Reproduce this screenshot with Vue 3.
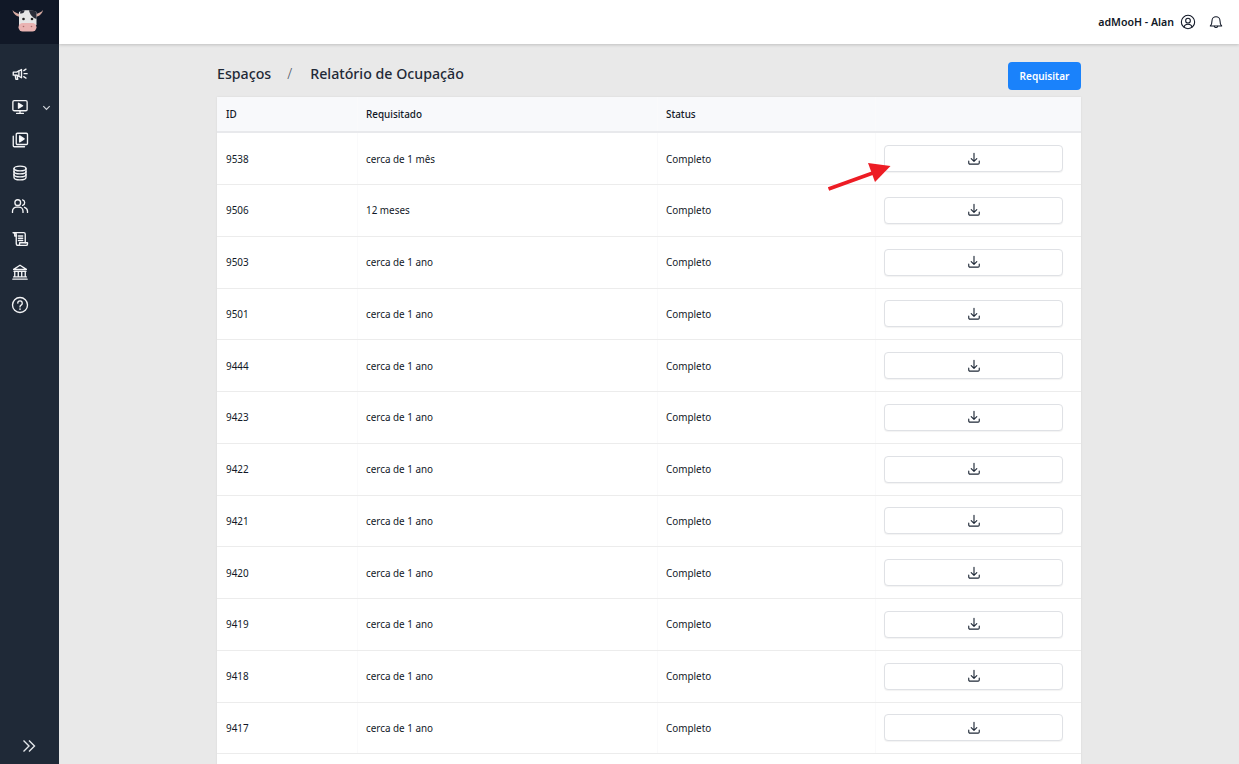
<script setup>
const rows = [
  ['9538', 'cerca de 1 mês'],
  ['9506', '12 meses'],
  ['9503', 'cerca de 1 ano'],
  ['9501', 'cerca de 1 ano'],
  ['9444', 'cerca de 1 ano'],
  ['9423', 'cerca de 1 ano'],
  ['9422', 'cerca de 1 ano'],
  ['9421', 'cerca de 1 ano'],
  ['9420', 'cerca de 1 ano'],
  ['9419', 'cerca de 1 ano'],
  ['9418', 'cerca de 1 ano'],
  ['9417', 'cerca de 1 ano']
]
</script>

<template>
  <div class="app">
    <aside class="side">
      <div class="logo">
        <svg width="32" height="24" viewBox="0 0 32 24">
          <path d="M8 6 C5 5.500 2 4 0.500 2 C1 5 3.500 8 8 9Z" fill="#d8aba2"/>
          <path d="M23.500 6 C26.500 5.500 29.500 4 31 2 C30.500 5 28 8 23.500 9Z" fill="#d8aba2"/>
          <path d="M7 4 C10 1.500 21 1.500 24.500 4 L24.500 17 L7 17Z" fill="#e6e6e6"/>
          <path d="M17 2.200 C20 2 23 2.500 24.500 4 L24.500 11 C21 10 18 7 17 2.200Z" fill="#2b2d38"/>
          <path d="M8.500 3 L12.500 2.300 C12.500 5 10.500 6 8 5.500Z" fill="#2b2d38"/>
          <circle cx="11.500" cy="11" r="1.300" fill="#222"/>
          <circle cx="20" cy="11" r="1.300" fill="#222"/>
          <rect x="6.500" y="15" width="18" height="8.500" rx="4.200" fill="#e9b3b2"/>
          <circle cx="11.500" cy="18.500" r="0.800" fill="#a86f6c"/>
          <circle cx="19.500" cy="18.500" r="0.800" fill="#a86f6c"/>
        </svg>
      </div>
      <nav class="nav">
        <div class="item">
          <svg class="ic" viewBox="0 0 24 24"><path d="M3 9.500h4.500L14 6v11L7.500 13.500H3z" /><path d="M5.500 13.500 6.500 19h2.500l-1-5.500" /><path d="M10.500 8v7" /><path d="M17.500 11.500h4M17 7.500 20 5.500M17 15.500 20 17.500"/></svg>
        </div>
        <div class="item">
          <svg class="ic" viewBox="0 0 24 24"><rect x="2.500" y="3.500" width="19" height="13.500" rx="1.800"/><path d="M12 17v3M7.500 20.500h9"/><path d="M10 7v6.500l5.500-3.200z" fill="#fff"/></svg>
          <svg class="chev" viewBox="0 0 12 12"><path d="M2.500 4.500 6 8l3.500-3.500"/></svg>
        </div>
        <div class="item">
          <svg class="ic" viewBox="0 0 24 24"><rect x="7" y="3" width="15" height="15" rx="1.500"/><path d="M3 7v12.500A1.500 1.500 0 0 0 4.500 21H18"/><path d="M11.500 6.500v8l6-4z" fill="#fff"/></svg>
        </div>
        <div class="item">
          <svg class="ic" viewBox="0 0 24 24"><ellipse cx="12" cy="6" rx="8" ry="3.200"/><path d="M4 6v12c0 1.800 3.600 3.200 8 3.200s8-1.400 8-3.200V6"/><path d="M4 10c0 1.800 3.600 3.200 8 3.200s8-1.400 8-3.200M4 14c0 1.800 3.600 3.200 8 3.200s8-1.400 8-3.200"/></svg>
        </div>
        <div class="item">
          <svg class="ic" viewBox="0 0 24 24"><circle cx="9" cy="7.500" r="3.800"/><path d="M2 20.500v-1.500a5.500 5.500 0 0 1 5.500-5.500h3a5.500 5.500 0 0 1 5.500 5.500v1.500"/><path d="M15.500 3.900a3.800 3.800 0 0 1 0 7.300M18 13.700a5.500 5.500 0 0 1 4 5.300v1.500"/></svg>
        </div>
        <div class="item">
          <svg class="ic" viewBox="0 0 24 24"><path d="M3 3.500h14a2 2 0 0 1 2 2V17"/><path d="M3 3.500a2 2 0 0 1 2 2V8h2.500M5 3.500a2 2 0 0 1 2 2V18a2.500 2.500 0 0 0 2.500 2.500H20a2 2 0 0 0 2-2V17H11.500v1.500a2 2 0 0 1-2 2"/><path d="M10 8h5.500M10 11h5.500M10 14h5.500" stroke-width="2"/></svg>
        </div>
        <div class="item">
          <svg class="ic" viewBox="0 0 24 24"><path d="M3.500 8.500 12 3l8.500 5.500z"/><path d="M5 11v7M9.700 11v7M14.300 11v7M19 11v7M4 11h16M3.500 18.500h17M2.500 21.500h19"/></svg>
        </div>
        <div class="item">
          <svg class="ic" viewBox="0 0 24 24"><circle cx="12" cy="12" r="10"/><path d="M9 9.500a3 3 0 1 1 4.500 2.600c-1 .6-1.500 1.200-1.500 2.400"/><path d="M12 17.300v.3" stroke-width="2.200"/></svg>
        </div>
      </nav>
      <div class="expand">
        <svg width="14" height="14" viewBox="0 0 14 14"><path d="M1.500 1.500 7 7l-5.500 5.500M7 1.500 12.500 7 7 12.500"/></svg>
      </div>
    </aside>

    <div class="body">
      <header class="top">
        <span class="user">adMooH - Alan</span>
        <svg class="tic" viewBox="0 0 24 24"><circle cx="12" cy="12" r="10"/><circle cx="12" cy="10" r="3.500"/><path d="M5.800 19.500c1-2.800 3.300-4.200 6.200-4.200s5.200 1.400 6.200 4.200"/></svg>
        <svg class="tic bell" viewBox="0 0 24 24"><path d="M6 10a6 6 0 0 1 12 0c0 5 1 6.500 2.500 8h-17C5 16.500 6 15 6 10z"/><path d="M9.500 18.500a2.600 2.600 0 0 0 5 0"/></svg>
      </header>

      <main class="main">
        <div class="head">
          <div class="crumbs">
            <span>Espaços</span>
            <span class="sep">/</span>
            <span>Relatório de Ocupação</span>
          </div>
          <button class="req">Requisitar</button>
        </div>

        <div class="table">
          <div class="row thead">
            <div class="cell">ID</div>
            <div class="cell">Requisitado</div>
            <div class="cell">Status</div>
            <div class="cell"></div>
          </div>
          <div v-for="r in rows" :key="r[0]" class="row">
            <div class="cell">{{ r[0] }}</div>
            <div class="cell">{{ r[1] }}</div>
            <div class="cell">Completo</div>
            <div class="cell">
              <button class="dl" aria-label="Baixar">
                <svg viewBox="0 0 16 16"><path d="M8 1.500v9M4.800 7.500 8 10.700l3.200-3.200"/><path d="M2 10.500v2a1.300 1.300 0 0 0 1.300 1.300h9.400a1.300 1.300 0 0 0 1.300-1.300v-2"/></svg>
              </button>
            </div>
          </div>
        </div>

        <svg class="arrow" width="70" height="34" viewBox="0 0 70 34">
          <path d="M1.500 29 50 11.500" stroke="#ed1c24" stroke-width="3.800" fill="none"/>
          <path d="M63.500 6 41 3 48 22z" fill="#ed1c24"/>
        </svg>
      </main>
    </div>
  </div>
</template>

<style>
html, body { margin: 0; height: 100%; overflow: hidden; }
</style>

<style scoped>
.app {
  display: flex;
  height: 100vh;
  overflow: hidden;
  font-family: "Noto Sans", "Open Sans", sans-serif;
  color: #1f2937;
  background: #e9e9e9;
}
.side {
  width: 59px;
  flex: none;
  background: #1f2937;
  display: flex;
  flex-direction: column;
}
.logo {
  height: 44px;
  background: #111827;
  display: flex;
  justify-content: flex-start;
  padding: 8px 0 0 12px;
  box-sizing: border-box;
}
.nav {
  flex: 1;
  padding-top: 21px;
  display: flex;
  flex-direction: column;
  gap: 15px;
}
.item {
  height: 18px;
  padding-left: 11px;
  display: flex;
  align-items: center;
  position: relative;
}
.ic {
  width: 18px;
  height: 18px;
  fill: none;
  stroke: #f3f4f6;
  stroke-width: 1.800;
  stroke-linecap: round;
  stroke-linejoin: round;
}
.chev {
  position: absolute;
  left: 41px;
  top: 4px;
  width: 11px;
  height: 11px;
  fill: none;
  stroke: #d1d5db;
  stroke-width: 1.300;
}
.expand {
  height: 25px;
  padding-left: 22px;
  display: flex;
  align-items: flex-start;
}
.expand svg {
  fill: none;
  stroke: #e5e7eb;
  stroke-width: 1.400;
}
.body {
  flex: 1;
  min-width: 0;
  display: flex;
  flex-direction: column;
}
.top {
  height: 44px;
  flex: none;
  background: #fff;
  box-shadow: 0 1px 3px rgba(0, 0, 0, 0.18);
  display: flex;
  align-items: center;
  justify-content: flex-end;
  padding-right: 15px;
  box-sizing: border-box;
  position: relative;
  z-index: 2;
}
.user {
  font-size: 10.600px;
  font-weight: 600;
  color: #111827;
  margin-right: 6px;
}
.tic {
  width: 16px;
  height: 16px;
  fill: none;
  stroke: #111827;
  stroke-width: 1.600;
  stroke-linecap: round;
  stroke-linejoin: round;
}
.bell { margin-left: 12px; }
.main {
  flex: 1;
  min-height: 0;
  padding: 0 158px;
  position: relative;
}
.head {
  height: 53px;
  display: flex;
  align-items: center;
  justify-content: space-between;
  padding-top: 11px;
  box-sizing: border-box;
}
.crumbs {
  display: flex;
  gap: 16px;
  font-size: 14.200px;
  font-weight: 500;
  color: #1f2937;
  margin-top: -6px;
}
.sep {
  font-weight: 300;
  color: #4b5563;
  margin-right: 2px;
}
.req {
  width: 73px;
  height: 28px;
  border: 0;
  border-radius: 4px;
  background: #1a82fb;
  color: #fff;
  font: 600 10px "Noto Sans", sans-serif;
  padding: 0;
}
.table {
  background: #fff;
  box-shadow: 0 0 2px rgba(0, 0, 0, 0.08);
  padding-bottom: 30px;
}
.row {
  display: grid;
  grid-template-columns: 140px 300px 218px 206px;
  height: 51.750px;
  box-sizing: border-box;
  border-bottom: 1px solid #ececec;
  font-size: 9.900px;
  color: #111827;
}
.thead {
  height: 36.250px;
  background: #f8f9fb;
  border-bottom: 2px solid #e8e9ec;
  font-weight: 500;
}
.cell {
  display: flex;
  align-items: center;
  padding-left: 9px;
}
.cell + .cell {
  border-left: 1px solid #fafafb;
  padding-left: 8px;
}
.dl {
  width: 179px;
  height: 27px;
  padding: 0;
  background: #fff;
  border: 1px solid #dfe1e5;
  border-radius: 4px;
  box-shadow: 0 1px 1px rgba(0, 0, 0, 0.05);
  display: flex;
  align-items: center;
  justify-content: center;
}
.dl svg {
  width: 14px;
  height: 14px;
  fill: none;
  stroke: #1f2937;
  stroke-width: 1.300;
  stroke-linecap: round;
  stroke-linejoin: round;
}
.arrow {
  position: absolute;
  left: 768px;
  top: 116px;
}
</style>
